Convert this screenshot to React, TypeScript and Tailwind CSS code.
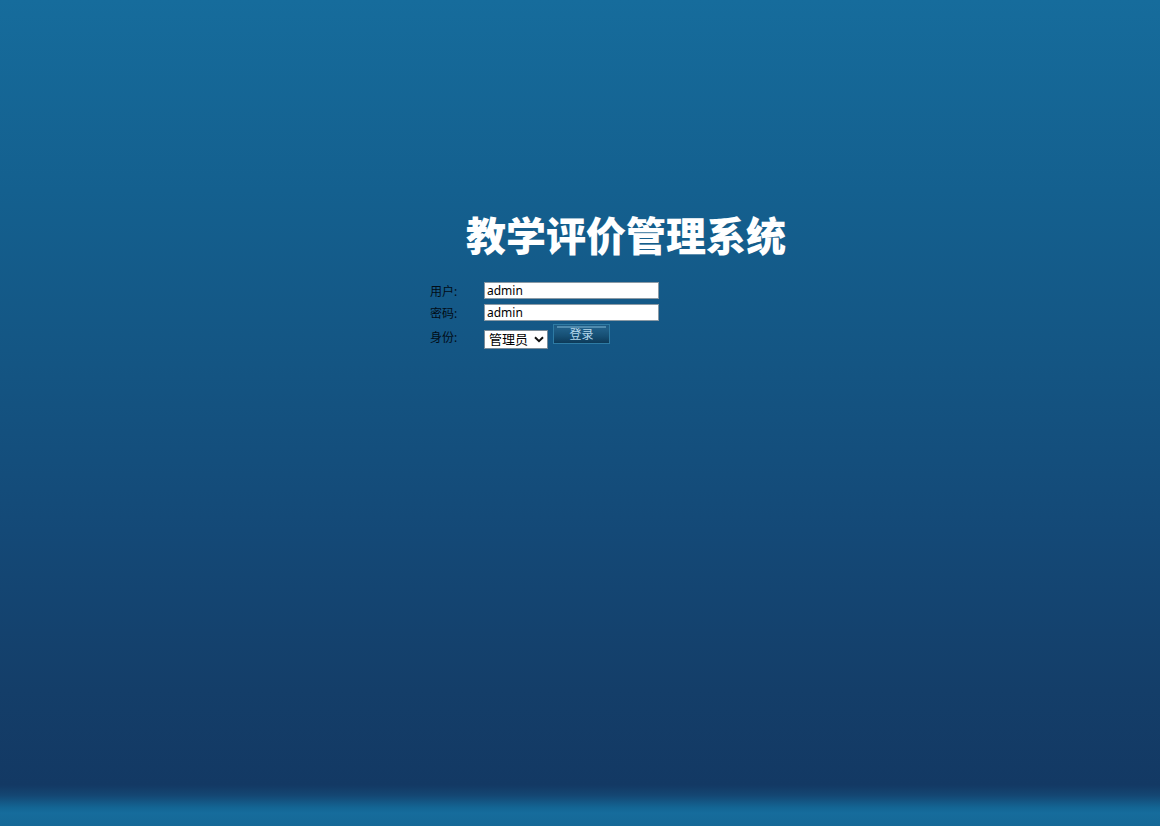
const field =
  "block h-[17px] w-[175px] border border-[#8b9aa5] bg-white px-[2px] pb-[1px] text-[12px] leading-[14px] text-black outline-none";
const label = "w-[54px] shrink-0 pt-[2px] text-[12px] leading-4 text-[#020c16]";

export default function App() {
  return (
    <main
      className="min-h-screen bg-[linear-gradient(to_bottom,#166c9c_0px,#14608f_190px,#145684_350px,#144977_530px,#143e69_690px,#133964_785px,#144672_795px,#136695_808px,#166c9c_813px,#156897_826px)] pt-[206px] font-['Noto_Sans','Noto_Sans_CJK_SC',sans-serif]"
    >
      <form className="mx-auto w-[300px]" onSubmit={(e) => e.preventDefault()}>
        <h1 className="ml-9 whitespace-nowrap font-['Noto_Sans_CJK_SC',sans-serif] text-[40px] font-black leading-[56px] text-white">
          教学评价管理系统
        </h1>
        <div className="mt-5 flex h-[17px] items-center">
          <label htmlFor="user" className={label}>用户:</label>
          <input id="user" type="text" defaultValue="admin" className={field} />
        </div>
        <div className="mt-[5px] flex h-[17px] items-center">
          <label htmlFor="password" className={label}>密码:</label>
          <input id="password" type="text" defaultValue="admin" className={field} />
        </div>
        <div className="mt-[3px] flex h-[25px] items-center">
          <label htmlFor="role" className={label}>身份:</label>
          <div className="flex h-full w-16 shrink-0 items-end">
            <div className="grid w-full">
              <select
                id="role"
                className="col-start-1 row-start-1 h-[19px] w-full appearance-none border border-[#7b8c99] bg-white pl-[4px] text-[13px] leading-[17px] text-black outline-none"
              >
                <option>管理员</option>
              </select>
              <svg
                viewBox="0 0 10 7"
                className="pointer-events-none col-start-1 row-start-1 mr-1 h-[7px] w-[10px] self-center justify-self-end"
                fill="none"
                stroke="#111"
                strokeWidth="2"
              >
                <path d="M1 1.2 5 5.2 9 1.2" />
              </svg>
            </div>
          </div>
          <button
            type="submit"
            className="ml-[5px] flex h-5 w-[57px] shrink-0 items-center justify-center self-start border border-[#2e7ba4] bg-[linear-gradient(#4f8bae,#4f8bae),linear-gradient(to_bottom,#1c5a83_0px,#205e86_4px,#164f74_11px,#0d3a59_18px)] bg-[length:49px_2px,100%_100%] bg-[position:3px_1px,0_0] bg-no-repeat pt-[2px] text-[12px] leading-4 text-[#b4d8ec]"
          >
            登录
          </button>
        </div>
      </form>
    </main>
  );
}
